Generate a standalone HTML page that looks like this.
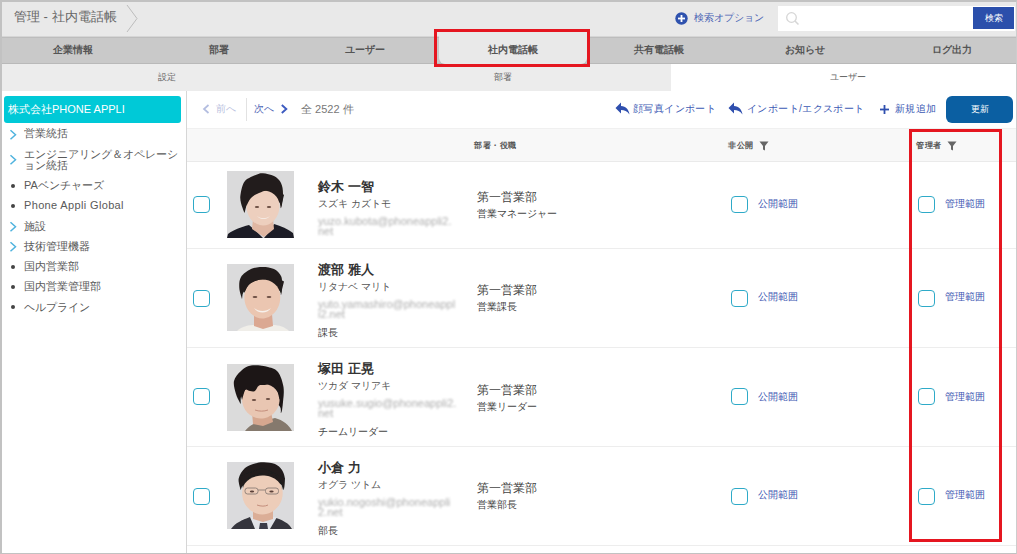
<!DOCTYPE html>
<html><head><meta charset="utf-8">
<style>
*{margin:0;padding:0;box-sizing:border-box}
html,body{width:1017px;height:554px;overflow:hidden;background:#fff;font-family:"Liberation Sans",sans-serif;color:#333}
.a{position:absolute;white-space:nowrap;line-height:1}
#frame{position:absolute;left:0;top:0;width:1017px;height:554px;border:1px solid #c2c2c2;border-top-width:2px;border-left-width:2px;border-right-width:1px;border-bottom-width:1px;border-right-color:#cdcdcd;pointer-events:none;z-index:50}
#hdr{position:absolute;left:0;top:0;width:1017px;height:37px;background:#e9e9e9}
#nav{position:absolute;left:0;top:36px;width:1017px;height:28px;background:#c9c9c9;border-top:1px solid #d6d6d6;box-shadow:inset 0 1px 0 #bdbdbd;border-bottom:1px solid #b9b9b9}
#sub{position:absolute;left:0;top:64px;width:1017px;height:27px;background:#ececec}
#subw{position:absolute;left:671px;top:64px;width:346px;height:27px;background:#fff}
.navt{position:absolute;top:45px;font-size:10px;font-weight:bold;color:#555;text-align:center;width:146px}
.subt{position:absolute;top:73px;font-size:9px;color:#666;text-align:center;width:120px}
#side{position:absolute;left:0;top:91px;width:187px;height:463px;background:#fff;border-right:1px solid #d6d6d6}
.si{position:absolute;left:24px;font-size:11px;color:#595959}
.chev{position:absolute;left:9px;width:8px;height:12px}
.dot{position:absolute;left:11px;width:4px;height:4px;border-radius:50%;background:#444}
.tb{position:absolute;font-size:10px;color:#3c5ab4;letter-spacing:0.4px}
#thead{position:absolute;left:187px;top:128px;width:830px;height:34px;background:#f8f8f8;border-top:1px solid #f0f0f0;border-bottom:1px solid #eaeaea}
.th{position:absolute;top:142px;font-size:8px;font-weight:bold;color:#555;letter-spacing:0.5px}
.rowl{position:absolute;left:187px;width:830px;height:1px;background:#ededed}
.cb{position:absolute;width:17px;height:17px;border:1.5px solid #2eaac8;border-radius:4px;background:#fff}
.photo{position:absolute;left:227px;width:67px;height:67px}
.nm{position:absolute;left:318px;font-size:13px;font-weight:bold;color:#333}
.kn{position:absolute;left:318px;font-size:10px;color:#555}
.em{position:absolute;left:318px;font-size:11px;color:#aeaeae;line-height:10px;filter:blur(1.2px)}
.tt{position:absolute;left:318px;font-size:10px;color:#444}
.dp{position:absolute;left:477px;font-size:12px;color:#444}
.dt{position:absolute;left:477px;font-size:10px;color:#444}
.lk{position:absolute;font-size:10px;color:#3d56b2}
.red{position:absolute;border:3px solid #e51620;z-index:40}
</style></head><body>
<svg width="0" height="0" style="position:absolute"><defs><filter id="soft" x="-10%" y="-10%" width="120%" height="120%"><feGaussianBlur stdDeviation="0.7"/></filter></defs></svg>
<div id="hdr"></div>
<div class="a" style="left:14px;top:10px;font-size:13px;color:#666">管理 - 社内電話帳</div>
<svg class="a" style="left:126px;top:4px" width="14" height="30"><polyline points="1,1 11,14.5 1,28" fill="none" stroke="#bdbdbd" stroke-width="1"/></svg>
<svg class="a" style="left:675px;top:12px" width="13" height="13"><circle cx="6.5" cy="6.5" r="6.2" fill="#2f52ae"/><rect x="3" y="5.6" width="7" height="1.8" fill="#fff"/><rect x="5.6" y="3" width="1.8" height="7" fill="#fff"/></svg>
<div class="a" style="left:694px;top:13px;font-size:10px;color:#4a63b4">検索オプション</div>
<div class="a" style="left:778px;top:6px;width:237px;height:25px;background:#fff"></div>
<svg class="a" style="left:785px;top:11px" width="16" height="16"><circle cx="6.5" cy="6.5" r="4.8" fill="none" stroke="#d6d6d6" stroke-width="1.3"/><line x1="10" y1="10" x2="13.5" y2="13.5" stroke="#d6d6d6" stroke-width="1.5"/></svg>
<div class="a" style="left:973px;top:7px;width:41px;height:22px;background:#2b4fab"></div>
<div class="a" style="left:973px;top:14px;width:41px;text-align:center;font-size:9px;color:#fff">検索</div>

<div id="nav"></div>
<div class="a" style="left:439px;top:36px;width:148px;height:28px;background:#e9e9e9;border-radius:0 0 6px 6px;box-shadow:0 1px 1px #b5b5b5"></div>
<div class="a navt" style="left:0px">企業情報</div>
<div class="a navt" style="left:146px">部署</div>
<div class="a navt" style="left:292px">ユーザー</div>
<div class="a navt" style="left:440px">社内電話帳</div>
<div class="a navt" style="left:586px">共有電話帳</div>
<div class="a navt" style="left:732px">お知らせ</div>
<div class="a navt" style="left:879px">ログ出力</div>
<div class="red" style="left:434px;top:29px;width:156px;height:38px"></div>

<div id="sub"></div>
<div id="subw"></div>
<div class="a subt" style="left:107px">設定</div>
<div class="a subt" style="left:443px">部署</div>
<div class="a subt" style="left:788px">ユーザー</div>

<div id="side"></div>
<div class="a" style="left:4px;top:96px;width:177px;height:27px;background:#00c9d7;border-radius:3px"></div>
<div class="a" style="left:8px;top:104px;font-size:11px;color:#fff">株式会社PHONE APPLI</div>

<!-- sidebar items -->
<svg class="a chev" style="top:129px" width="8" height="12"><polyline points="1.5,1.2 6.5,5.7 1.5,10.2" fill="none" stroke="#4fb3de" stroke-width="1.5"/></svg>
<div class="a si" style="top:128px">営業統括</div>
<svg class="a chev" style="top:154px" width="8" height="12"><polyline points="1.5,1.2 6.5,5.7 1.5,10.2" fill="none" stroke="#4fb3de" stroke-width="1.5"/></svg>
<div class="a si" style="top:149px">エンジニアリング＆オペレーシ</div>
<div class="a si" style="top:160px">ョン統括</div>
<div class="a dot" style="top:184px"></div>
<div class="a si" style="top:180px">PAベンチャーズ</div>
<div class="a dot" style="top:204px"></div>
<div class="a si" style="top:200px;letter-spacing:0.35px">Phone Appli Global</div>
<svg class="a chev" style="top:221px" width="8" height="12"><polyline points="1.5,1.2 6.5,5.7 1.5,10.2" fill="none" stroke="#4fb3de" stroke-width="1.5"/></svg>
<div class="a si" style="top:221px">施設</div>
<svg class="a chev" style="top:241px" width="8" height="12"><polyline points="1.5,1.2 6.5,5.7 1.5,10.2" fill="none" stroke="#4fb3de" stroke-width="1.5"/></svg>
<div class="a si" style="top:241px">技術管理機器</div>
<div class="a dot" style="top:265px"></div>
<div class="a si" style="top:261px">国内営業部</div>
<div class="a dot" style="top:285px"></div>
<div class="a si" style="top:281px">国内営業管理部</div>
<div class="a dot" style="top:305px"></div>
<div class="a si" style="top:302px">ヘルプライン</div>

<!-- toolbar -->
<svg class="a" style="left:202px;top:104px" width="9" height="11"><polyline points="6.5,1 2,5 6.5,9" fill="none" stroke="#b3bde0" stroke-width="1.7"/></svg>
<div class="a tb" style="left:216px;top:104px;color:#bac2e0;font-size:10px;letter-spacing:0">前へ</div>
<div class="a" style="left:246px;top:98px;width:1px;height:23px;background:#e2e2e2"></div>
<div class="a tb" style="left:254px;top:104px;color:#5065b5;font-size:10px;letter-spacing:0">次へ</div>
<svg class="a" style="left:280px;top:104px" width="9" height="11"><polyline points="1.8,1 6.3,5 1.8,9" fill="none" stroke="#3d5bc0" stroke-width="1.9"/></svg>
<div class="a tb" style="left:301px;top:104px;color:#777;font-size:11px;letter-spacing:0">全 2522 件</div>
<svg class="a" style="left:615px;top:102px" width="15" height="13" viewBox="0 0 15 13"><path d="M6 0.5 L0.5 6 L6 11.5 L6 8 C9.5 8 12 9 14.5 12.5 C13.8 7.5 11 4.5 6 4 Z" fill="#2f4fae"/></svg>
<div class="a tb" style="left:633px;top:104px">顔写真インポート</div>
<svg class="a" style="left:728px;top:102px" width="15" height="13" viewBox="0 0 15 13"><path d="M6 0.5 L0.5 6 L6 11.5 L6 8 C9.5 8 12 9 14.5 12.5 C13.8 7.5 11 4.5 6 4 Z" fill="#2f4fae"/></svg>
<div class="a tb" style="left:747px;top:104px">インポート/エクスポート</div>
<svg class="a" style="left:880px;top:105px" width="9" height="9"><rect x="0" y="3.6" width="9" height="1.8" fill="#2f4fae"/><rect x="3.6" y="0" width="1.8" height="9" fill="#2f4fae"/></svg>
<div class="a tb" style="left:895px;top:104px">新規追加</div>
<div class="a" style="left:946px;top:96px;width:67px;height:27px;background:#0b5fa2;border-radius:6px"></div>
<div class="a" style="left:946px;top:105px;width:67px;text-align:center;font-size:9px;color:#fff">更新</div>

<!-- table header -->
<div id="thead"></div>
<div class="a th" style="left:474px">部署・役職</div>
<div class="a th" style="left:728px">非公開</div>
<svg class="a" style="left:759px;top:141px" width="10" height="10"><path d="M0.5 0.5 H9.5 L6 5 V9.5 L4 8.5 V5 Z" fill="#666"/></svg>
<div class="a th" style="left:916px">管理者</div>
<svg class="a" style="left:947px;top:141px" width="10" height="10"><path d="M0.5 0.5 H9.5 L6 5 V9.5 L4 8.5 V5 Z" fill="#666"/></svg>

<div class="a rowl" style="top:248px"></div>
<div class="a rowl" style="top:347px"></div>
<div class="a rowl" style="top:446px"></div>
<div class="a rowl" style="top:545px"></div>

<!-- rows -->
<div class="a cb" style="left:193px;top:196px"></div>
<svg class="a photo" style="top:171px" viewBox="0 0 67 67"><rect width="67" height="67" fill="#dadadb"/><g filter="url(#soft)"><path d="M0 67 L1 63 C6 59 14 56 22 54 L30 61 L36 67 Z M67 67 L66 62 C61 58 54 55 47 53 L42 61 L37 67 Z" fill="#1c1d25"/><path d="M26 48 L46 48 L47 58 L37 66 L25 58 Z" fill="#e0b7a3"/><path d="M17.5 42.0 C16.9 40.3 14.7 35.2 14.0 32.0 C13.3 28.8 12.9 26.7 13.6 23.0 C14.3 19.3 15.3 13.2 18.0 10.0 C20.7 6.8 27.0 4.8 30.0 3.5 C33.0 2.2 33.2 2.0 36.0 2.2 C38.8 2.5 44.0 3.4 47.0 5.0 C50.0 6.6 52.5 9.0 54.0 12.0 C55.5 15.0 56.0 18.8 56.0 23.0 C56.0 27.2 55.0 35.8 54.0 37.0 C53.0 38.2 55.0 31.2 50.0 30.0 C45.0 28.8 29.4 28.0 24.0 30.0 C18.6 32.0 18.6 40.0 17.5 42.0 Z" fill="#221c1b"/><path d="M19.5 35.2 C19.5 14.2 52.5 14.2 52.5 35.2 C52.5 46.6 44.2 54.5 36.0 54.5 C27.8 54.5 19.5 46.6 19.5 35.2 Z" fill="#edcfbe"/><path d="M19.5 35.0 C20.2 33.7 21.9 29.2 24.0 27.0 C26.1 24.8 29.2 23.2 32.0 22.0 C34.8 20.8 38.2 19.2 41.0 19.5 C43.8 19.8 47.2 22.4 49.0 24.0 C50.8 25.6 51.2 27.0 52.0 29.0 C52.8 31.0 53.7 34.8 54.0 36.0 L57.0 24.0 L36.8 6 L16.5 23.0 Z" fill="#221c1b"/><path d="M30 45 C34 48 39 48 43 45 C40 49 33 49 30 45 Z" fill="#f7f1ec"/><ellipse cx="30" cy="36" rx="2.2" ry="1" fill="#6a4c42"/><ellipse cx="42" cy="36" rx="2.2" ry="1" fill="#6a4c42"/></g></svg>
<div class="a nm" style="top:180px">鈴木 一智</div>
<div class="a kn" style="top:199px">スズキ カズトモ</div>
<div class="a em" style="top:216px">yuzo.kubota@phoneappli2.<br>net</div>
<div class="a dp" style="top:191px">第一営業部</div>
<div class="a dt" style="top:209px">営業マネージャー</div>
<div class="a cb" style="left:731px;top:196px"></div>
<div class="a lk" style="left:758px;top:199px">公開範囲</div>
<div class="a cb" style="left:918px;top:196px"></div>
<div class="a lk" style="left:945px;top:199px">管理範囲</div>
<div class="a cb" style="left:193px;top:290px"></div>
<svg class="a photo" style="top:264px" viewBox="0 0 67 67"><rect width="67" height="67" fill="#dbdbdc"/><g filter="url(#soft)"><path d="M10 67 C15 62 22 61 28 61 L46 61 C52 61 58 63 62 67 Z" fill="#f0eee9"/><path d="M27 50 L45 50 L46 62 L36 65 L27 62 Z" fill="#dba892"/><path d="M15.0 35.0 C14.6 33.2 12.5 27.7 12.3 24.0 C12.1 20.3 12.1 16.2 14.0 13.0 C15.9 9.8 20.4 6.7 24.0 5.0 C27.6 3.3 31.9 2.9 35.7 2.9 C39.5 2.9 44.0 3.5 47.0 5.0 C50.0 6.5 52.7 9.4 54.0 12.0 C55.3 14.6 55.0 17.2 55.0 20.4 C55.0 23.6 54.8 30.1 54.0 31.0 C53.2 31.9 55.7 26.8 50.0 26.0 C44.3 25.2 25.8 24.5 20.0 26.0 C14.2 27.5 15.8 33.5 15.0 35.0 Z" fill="#211c1b"/><path d="M17.3 33.0 C17.3 9.6 53.3 9.6 53.3 33.0 C53.3 45.7 44.3 54.5 35.3 54.5 C26.3 54.5 17.3 45.7 17.3 33.0 Z" fill="#ebc6b1"/><path d="M17.5 29.0 C17.9 28.0 18.9 24.7 20.0 23.0 C21.1 21.3 21.8 20.2 24.0 19.0 C26.2 17.8 29.8 16.1 33.0 15.5 C36.2 14.9 40.5 14.5 43.5 15.5 C46.5 16.5 49.5 19.4 51.3 21.7 C53.0 24.0 53.5 28.2 54.0 29.5 L57.0 17.5 L35.8 6 L14.5 17.0 Z" fill="#211c1b"/><path d="M27 44 C32 48 39 48 44 44 C40 50 31 50 27 44 Z" fill="#f7f1ec"/><ellipse cx="28" cy="33" rx="2.4" ry="1" fill="#6a4c42"/><ellipse cx="42" cy="33" rx="2.4" ry="1" fill="#6a4c42"/></g></svg>
<div class="a nm" style="top:263px">渡部 雅人</div>
<div class="a kn" style="top:282px">リタナベ マリト</div>
<div class="a em" style="top:299px">yuto.yamashiro@phoneappl<br>i2.net</div>
<div class="a tt" style="top:328px">課長</div>
<div class="a dp" style="top:284px">第一営業部</div>
<div class="a dt" style="top:302px">営業課長</div>
<div class="a cb" style="left:731px;top:290px"></div>
<div class="a lk" style="left:758px;top:292px">公開範囲</div>
<div class="a cb" style="left:918px;top:290px"></div>
<div class="a lk" style="left:945px;top:292px">管理範囲</div>
<div class="a cb" style="left:193px;top:388px"></div>
<svg class="a photo" style="top:364px" viewBox="0 0 67 67"><rect width="67" height="67" fill="#dbdbdb"/><g filter="url(#soft)"><path d="M18 67 C22 61 30 58 36 57 L48 54 C56 56 62 61 65 67 Z" fill="#85796d"/><path d="M25 48 L44 48 L46 58 L36 62 L26 60 Z" fill="#d6a78f"/><path d="M13.6 40.0 C12.8 38.3 10.1 33.8 9.0 30.0 C7.9 26.2 6.2 20.8 7.0 17.0 C7.8 13.2 11.2 9.6 14.0 7.0 C16.8 4.4 19.5 2.3 24.0 1.6 C28.5 0.9 36.5 1.8 41.0 2.9 C45.5 4.0 48.4 4.7 51.0 8.0 C53.6 11.3 55.7 18.0 56.5 23.0 C57.3 28.0 56.4 33.7 56.0 38.0 C55.6 42.3 55.0 48.7 54.0 49.0 C53.0 49.3 56.0 43.2 50.0 40.0 C44.0 36.8 24.1 30.0 18.0 30.0 C11.9 30.0 14.3 38.3 13.6 40.0 Z" fill="#1e1918"/><path d="M15.0 35.2 C15.0 14.2 52.6 14.2 52.6 35.2 C52.6 46.6 43.2 54.5 33.8 54.5 C24.4 54.5 15.0 46.6 15.0 35.2 Z" fill="#e9c6b2"/><path d="M15.0 36.0 C15.3 34.8 16.4 30.7 17.0 29.0 C17.6 27.3 17.8 25.9 18.8 25.6 C19.8 25.3 21.5 26.8 23.0 27.0 C24.5 27.2 26.4 27.8 27.9 26.9 C29.4 26.0 30.1 22.7 31.8 21.7 C33.5 20.7 36.0 21.2 38.0 21.0 C40.0 20.8 41.5 19.4 43.5 20.4 C45.5 21.4 48.5 24.4 50.0 27.0 C51.5 29.6 52.2 34.5 52.6 36.0 L55.6 24.0 L33.8 6 L12.0 24.0 Z" fill="#1e1918"/><ellipse cx="27" cy="36" rx="2.2" ry="1" fill="#6a4c42"/><ellipse cx="41" cy="35" rx="2.2" ry="1" fill="#6a4c42"/><path d="M28 46 C32 47.5 37 47.5 41 46" fill="none" stroke="#c48e7c" stroke-width="1"/></g></svg>
<div class="a nm" style="top:362px">塚田 正晃</div>
<div class="a kn" style="top:381px">ツカダ マリアキ</div>
<div class="a em" style="top:398px">yusuke.sugio@phoneappli2.<br>net</div>
<div class="a tt" style="top:427px">チームリーダー</div>
<div class="a dp" style="top:384px">第一営業部</div>
<div class="a dt" style="top:402px">営業リーダー</div>
<div class="a cb" style="left:731px;top:388px"></div>
<div class="a lk" style="left:758px;top:392px">公開範囲</div>
<div class="a cb" style="left:918px;top:388px"></div>
<div class="a lk" style="left:945px;top:392px">管理範囲</div>
<div class="a cb" style="left:193px;top:488px"></div>
<svg class="a photo" style="top:462px" viewBox="0 0 67 67"><rect width="67" height="67" fill="#dbdbdd"/><g filter="url(#soft)"><path d="M4 67 C8 61 15 58 23 55 L47 55 C55 58 62 61 65 67 Z" fill="#34353c"/><path d="M23 55 L50 55 L43 67 L28 67 Z" fill="#e1e3e8"/><path d="M33 61 L40 61 L41 67 L32 67 Z" fill="#3b3d4a"/><path d="M26 46 L46 46 L46 57 L36 60 L26 57 Z" fill="#dbae97"/><path d="M13.6 28.0 C13.3 26.1 11.0 20.2 11.7 16.5 C12.4 12.8 15.3 8.5 18.0 6.0 C20.7 3.5 24.8 2.5 28.0 1.5 C31.2 0.5 33.7 0.2 37.0 0.3 C40.3 0.4 45.0 0.7 48.0 2.0 C51.0 3.3 53.4 5.6 55.0 8.0 C56.6 10.4 57.5 13.2 57.8 16.5 C58.0 19.8 57.5 27.1 56.5 28.0 C55.5 28.9 58.1 23.0 52.0 22.0 C45.9 21.0 26.4 21.0 20.0 22.0 C13.6 23.0 14.7 27.0 13.6 28.0 Z" fill="#201d1d"/><path d="M15.1 31.1 C15.1 7.6 55.7 7.6 55.7 31.1 C55.7 43.7 45.5 52.5 35.4 52.5 C25.2 52.5 15.1 43.7 15.1 31.1 Z" fill="#edcdb9"/><path d="M16.0 26.0 C16.3 25.0 16.9 21.8 18.0 20.0 C19.1 18.2 20.0 16.6 22.7 15.2 C25.4 13.8 30.3 11.7 34.4 11.3 C38.5 10.9 44.1 11.1 47.4 12.6 C50.7 14.1 52.7 17.8 54.0 20.4 C55.3 23.0 54.8 26.7 55.0 28.0 L58.0 16.0 L35.5 6 L13.0 14.0 Z" fill="#201d1d"/><g fill="none" stroke="#8a7d76" stroke-width="0.9"><rect x="18" y="26" width="13" height="6" rx="2.5"/><rect x="38.5" y="26" width="13" height="6" rx="2.5"/><line x1="31" y1="28" x2="38.5" y2="28"/></g><ellipse cx="25" cy="29.5" rx="2.2" ry="0.9" fill="#5a4038"/><ellipse cx="44.5" cy="29.5" rx="2.2" ry="0.9" fill="#5a4038"/><path d="M30 43 C34 44.5 38 44.5 41 43" fill="none" stroke="#c48e7c" stroke-width="1"/></g></svg>
<div class="a nm" style="top:461px">小倉 力</div>
<div class="a kn" style="top:480px">オグラ ツトム</div>
<div class="a em" style="top:497px">yukio.nogoshi@phoneappli<br>2.net</div>
<div class="a tt" style="top:526px">部長</div>
<div class="a dp" style="top:482px">第一営業部</div>
<div class="a dt" style="top:500px">営業部長</div>
<div class="a cb" style="left:731px;top:488px"></div>
<div class="a lk" style="left:758px;top:490px">公開範囲</div>
<div class="a cb" style="left:918px;top:488px"></div>
<div class="a lk" style="left:945px;top:490px">管理範囲</div>

<div class="red" style="left:909px;top:129px;width:93px;height:413px"></div>
<div id="frame"></div>
</body></html>
